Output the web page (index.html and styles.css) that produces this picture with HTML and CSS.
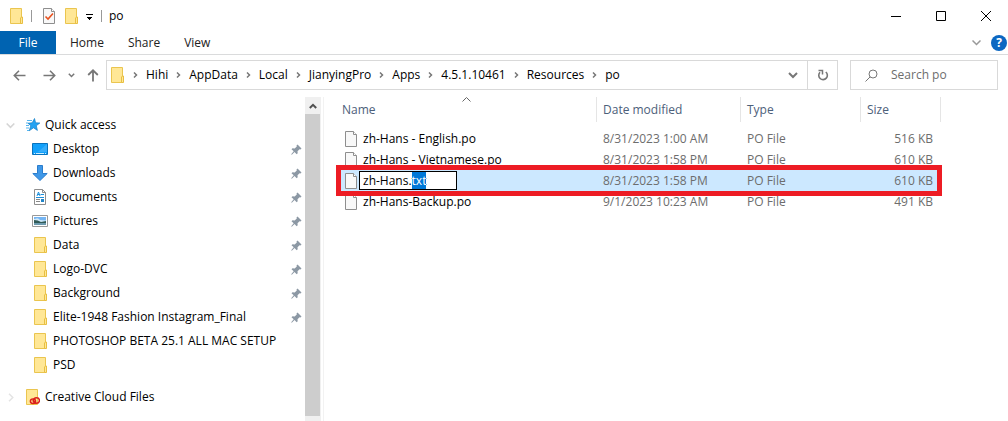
FILE: index.html
```
<!DOCTYPE html>
<html lang="en">
<head>
<meta charset="utf-8">
<title>po</title>
<link rel="stylesheet" href="styles.css">
</head>
<body>
<svg class="sprite" aria-hidden="true">
  <symbol id="folder" viewBox="0 0 14 16">
    <path d="M.5.5h11v15H.5z" fill="#ffe796" stroke="#eac54f"/>
    <path d="M10.500 15.500V10l1-1h1v6.500z" fill="#ffe796" stroke="#e8bf42"/>
  </symbol>
  <symbol id="page" viewBox="0 0 12 16">
    <path d="M.5.5h8l3 3v12H.5z" fill="#f8f8f8" stroke="#8e8e8e"/>
    <path d="M8.500.5v3h3" fill="#fff" stroke="#8e8e8e"/>
  </symbol>
  <symbol id="pin" viewBox="0 0 11 11">
    <path d="M6.500.5l4 4-1 1-1-.2-2 2 .2 2-1 1L3.500 8 .8 10.700l-.6-.4L2.700 7.300.5 5.200l1-1 2.200.3 2.100-2-.3-1z" fill="#8c98a4"/>
  </symbol>
  <symbol id="next" viewBox="0 0 5 6">
    <path d="M1 .5 3.500 3 1 5.500" fill="none" stroke="#777" stroke-width="1.500"/>
  </symbol>
</svg>

<header class="titlebar">
  <svg class="folder"><use href="#folder"/></svg>
  <span class="rule"></span>
  <button class="plain" aria-label="Properties"><svg width="12" height="16" viewBox="0 0 12 16"><use href="#page" width="12" height="16"/><path d="M2.500 8.500 5 11l5-5.500" fill="none" stroke="#e8511e" stroke-width="1.600"/></svg></button>
  <button class="plain" aria-label="New folder"><svg class="folder"><use href="#folder"/></svg></button>
  <button class="plain customize" aria-label="Customize toolbar"><svg width="7" height="6" viewBox="0 0 7 6"><path d="M0 0h7v1H0zM1 3h5v1H5v1H4v1H3V5H2V4H1z"/></svg></button>
  <span class="rule"></span>
  <h1 class="title">po</h1>
  <div class="window-controls">
    <button aria-label="Minimize"><svg width="10" height="10"><path d="M0 5.500h10" stroke="#000"/></svg></button>
    <button aria-label="Maximize"><svg width="10" height="10"><path d="M.5.5h9v9h-9z" fill="none" stroke="#000"/></svg></button>
    <button aria-label="Close"><svg width="10" height="10"><path d="m0 0 10 10M10 0 0 10" stroke="#000"/></svg></button>
  </div>
</header>

<nav class="tabs">
  <button class="file-tab">File</button>
  <button>Home</button>
  <button>Share</button>
  <button>View</button>
  <div class="tab-tools">
    <button aria-label="Expand ribbon"><svg width="9" height="6" viewBox="0 0 9 6"><path d="m.5.5 4 4 4-4" fill="none" stroke="#999" stroke-width="1.500"/></svg></button>
    <button class="help" aria-label="Help">?</button>
  </div>
</nav>

<div class="navigation">
  <div class="history">
    <button aria-label="Back"><svg width="13" height="11" viewBox="0 0 13 11"><path d="M12.500 5.500H1.500M6 .8 1.300 5.500 6 10.200" fill="none" stroke="#777" stroke-width="1.600"/></svg></button>
    <button aria-label="Forward"><svg width="13" height="11" viewBox="0 0 13 11"><path d="M.5 5.500h11M7 .8l4.700 4.700L7 10.200" fill="none" stroke="#777" stroke-width="1.600"/></svg></button>
    <button aria-label="Recent locations"><svg width="7" height="5" viewBox="0 0 7 5"><path d="m.8.8 2.700 2.700L6.200.8" fill="none" stroke="#777" stroke-width="1.500"/></svg></button>
    <button aria-label="Up"><svg width="12" height="13" viewBox="0 0 12 13"><path d="M6 12.500V1.500M1.200 6 6 1.300 10.800 6" fill="none" stroke="#777" stroke-width="1.800"/></svg></button>
  </div>
  <div class="address">
    <svg class="folder"><use href="#folder"/></svg>
    <svg class="next"><use href="#next"/></svg><a href="#">Hihi</a>
    <svg class="next"><use href="#next"/></svg><a href="#">AppData</a>
    <svg class="next"><use href="#next"/></svg><a href="#">Local</a>
    <svg class="next"><use href="#next"/></svg><a href="#">JianyingPro</a>
    <svg class="next"><use href="#next"/></svg><a href="#">Apps</a>
    <svg class="next"><use href="#next"/></svg><a href="#">4.5.1.10461</a>
    <svg class="next"><use href="#next"/></svg><a href="#">Resources</a>
    <svg class="next"><use href="#next"/></svg><a href="#">po</a>
    <button class="drop" aria-label="Previous locations"><svg width="10" height="7" viewBox="0 0 10 7"><path d="m1 1 4 4 4-4" fill="none" stroke="#777" stroke-width="2"/></svg></button>
    <button class="refresh" aria-label="Refresh"><svg width="12" height="12" viewBox="0 0 12 12"><path d="M8.800 3A4.300 4.300 0 1 1 3 3.300" fill="none" stroke="#777" stroke-width="1.600"/><path d="M1.500 1.500h4v4" fill="none" stroke="#777" stroke-width="1.500"/></svg></button>
  </div>
  <label class="search">
    <svg width="13" height="13" viewBox="0 0 13 13"><circle cx="8" cy="5" r="4" fill="none" stroke="#777"/><path d="M5.200 7.800.5 12.500" stroke="#777"/></svg>
    <input type="search" placeholder="Search po" aria-label="Search po">
  </label>
</div>

<main class="content">
  <aside class="sidebar">
    <div class="tree">
      <a class="root" href="#">
        <svg class="twist" viewBox="0 0 9 9"><path d="m.7 2.500 3.800 3.800 3.800-3.800" fill="none" stroke="#d5d5d5" stroke-width="1.600"/></svg>
        <svg width="14" height="14" viewBox="0 0 14 14"><path d="M8.500.5 9.600 4.800l4.300.2-3.600 2.700 1.100 4.700-3.900-2.600-4.300 3 1.600-5L2 5.200l4.200-.4z" fill="#22a2f2" stroke="#147fc7" stroke-width=".7"/><path d="M1 2.500h5M0 5h2M0 7.500h3M0 10h3M1 12.500h2" stroke="#54b4ee"/></svg>
        Quick access</a>
      <ul class="places">
        <li><a href="#"><svg viewBox="0 0 16 16"><path d="M.5 2.500h15v11H.5z" fill="#12a0fa" stroke="#0872bd"/><path d="M15 3v8H6z" fill="#36adfb"/><path d="M2 12.500h1M4 12.500h8M13 12.500h1" stroke="#cdeeff"/></svg>Desktop</a><svg class="pin"><use href="#pin"/></svg></li>
        <li><a href="#"><svg viewBox="0 0 16 16"><path d="M5.500.5h5v8h4.700L8 15.500.8 8.500h4.700z" fill="#3f98e8" stroke="#2b7dcc"/></svg>Downloads</a><svg class="pin"><use href="#pin"/></svg></li>
        <li><a href="#"><svg viewBox="0 0 16 16"><path d="M2.500.5h8l3 3v12h-11z" fill="#fff" stroke="#8e8e8e"/><path d="M10.500.5v3h3" fill="none" stroke="#8e8e8e"/><path d="m5 7 1.500-4L8 7M5.500 5.500h2M8.500 5.500H12M4 8.500h8" fill="none" stroke="#1b8fdc"/><path d="M4 10.500h4M4 12.500h4" stroke="#888"/><path d="M9 10h3v3H9z" fill="#2184c7"/></svg>Documents</a><svg class="pin"><use href="#pin"/></svg></li>
        <li><a href="#"><svg viewBox="0 0 16 16"><path d="M.5 2.500h15v11H.5z" fill="#fff" stroke="#999"/><path d="M2 4h12v4H2z" fill="#75b5f3"/><path d="M3 6q3-2 5 1l6 .5V9H2V6z" fill="#cfe8f8"/><path d="M2 7q4 0 7 2l5-1v2H2z" fill="#315b57"/><path d="M2 10h12v2H2z" fill="#6c9aae"/></svg>Pictures</a><svg class="pin"><use href="#pin"/></svg></li>
        <li><a href="#"><svg class="folder"><use href="#folder"/></svg>Data</a><svg class="pin"><use href="#pin"/></svg></li>
        <li><a href="#"><svg class="folder"><use href="#folder"/></svg>Logo-DVC</a><svg class="pin"><use href="#pin"/></svg></li>
        <li><a href="#"><svg class="folder"><use href="#folder"/></svg>Background</a><svg class="pin"><use href="#pin"/></svg></li>
        <li><a href="#"><svg class="folder"><use href="#folder"/></svg>Elite-1948 Fashion Instagram_Final</a><svg class="pin"><use href="#pin"/></svg></li>
        <li><a href="#"><svg class="folder"><use href="#folder"/></svg>PHOTOSHOP BETA 25.1 ALL MAC SETUP</a></li>
        <li><a href="#"><svg class="folder"><use href="#folder"/></svg>PSD</a></li>
      </ul>
      <a class="root" href="#">
        <svg class="twist" viewBox="0 0 9 9"><path d="m3 .7 3.800 3.800L3 8.300" fill="none" stroke="#e4e4e4" stroke-width="1.500"/></svg>
        <svg width="14" height="16" viewBox="0 0 14 16"><path d="M.5.5h11v15H.5z" fill="#ffe796" stroke="#eac54f"/><g fill="none" stroke="#da1f1b" stroke-width="1.500"><ellipse cx="7" cy="12.200" rx="2.600" ry="2.200"/><ellipse cx="10.500" cy="11.500" rx="2.900" ry="2.800"/><path d="m6.500 11.500 3.500 2.700"/></g></svg>
        Creative Cloud Files</a>
    </div>
    <div class="scrollbar">
      <button aria-label="Scroll up"><svg width="8" height="6" viewBox="0 0 8 6"><path d="m.8 5 3.200-3.200L7.200 5" fill="none" stroke="#505050" stroke-width="2"/></svg></button>
      <div class="thumb"></div>
    </div>
  </aside>

  <section class="files">
    <table>
      <colgroup><col class="c-name"><col class="c-date"><col class="c-type"><col class="c-size"></colgroup>
      <thead>
        <tr>
          <th scope="col">Name<svg class="sort" viewBox="0 0 9 5"><path d="m.5 4.500 4-4 4 4" fill="none" stroke="#666"/></svg></th>
          <th scope="col">Date modified</th><th scope="col">Type</th><th scope="col">Size</th>
        </tr>
      </thead>
      <tbody>
        <tr><td><div class="name"><svg><use href="#page"/></svg><span>zh-Hans - English.po</span></div></td><td>8/31/2023 1:00 AM</td><td>PO File</td><td>516 KB</td></tr>
        <tr><td><div class="name"><svg><use href="#page"/></svg><span>zh-Hans - Vietnamese.po</span></div></td><td>8/31/2023 1:58 PM</td><td>PO File</td><td>610 KB</td></tr>
        <tr class="selected"><td><div class="name"><svg><use href="#page"/></svg><input id="rename" type="text" value="zh-Hans.txt" aria-label="File name" spellcheck="false"></div></td><td>8/31/2023 1:58 PM</td><td>PO File</td><td>610 KB</td></tr>
        <tr><td><div class="name"><svg><use href="#page"/></svg><span>zh-Hans-Backup.po</span></div></td><td>9/1/2023 10:23 AM</td><td>PO File</td><td>491 KB</td></tr>
      </tbody>
    </table>
  </section>
</main>
<script src="main.js"></script>
</body>
</html>
```
FILE: styles.css
```
* { box-sizing: border-box; }
body {
  margin: 0;
  min-height: 100vh;
  display: flex;
  flex-direction: column;
  background: #fff;
  color: #000;
  font: 12px/16px "Open Sans", "Segoe UI", sans-serif;
}
button, input { font: inherit; color: inherit; }
button { border: 0; padding: 0; background: none; display: flex; align-items: center; justify-content: center; }
a { color: inherit; text-decoration: none; white-space: nowrap; }
svg { flex: none; display: block; }
.sprite { position: absolute; width: 0; height: 0; }
.folder { width: 14px; height: 16px; }

.titlebar { display: flex; align-items: center; height: 31px; padding-left: 10px; }
.titlebar .rule { width: 1px; height: 12px; margin: 0 11px 0 7px; background: #999; }
.titlebar .plain { margin-right: 10px; }
.titlebar .customize { margin: 2px 1px 0 -3px; }
.title { margin: 0 0 0 -4px; font-size: 12px; font-weight: 400; }
.window-controls { display: flex; align-self: stretch; margin-left: auto; }
.window-controls button { width: 45px; }

.tabs { display: flex; height: 24px; border-bottom: 1px solid #dadbdc; color: #222; }
.tabs > button { padding: 0 12px; }
.tabs .file-tab { width: 56px; background: #0063b1; color: #fff; margin-right: 2px; }
.tab-tools { display: flex; align-items: center; gap: 10px; margin-left: auto; }
.tab-tools .help { width: 16px; height: 16px; border-radius: 8px; background: #0b67c2; color: #fff; font-weight: 700; margin-right: 1px; }

.navigation { display: flex; align-items: center; padding: 5px 10px 6px 0; }
.history { display: flex; align-items: center; gap: 12px; width: 106px; padding-left: 13px; }
.history button:first-child { margin-right: 5px; }
.address { display: flex; align-items: center; flex: 1; height: 30px; padding-left: 4px; border: 1px solid #d9d9d9; }
.address .next { width: 5px; height: 6px; margin: 0 8px; }
.address .drop { width: 28px; align-self: stretch; margin-left: auto; }
.address .refresh { width: 30px; align-self: stretch; border-left: 1px solid #d9d9d9; }
.search { display: flex; align-items: center; gap: 13px; width: 148px; height: 30px; margin-left: 12px; padding: 0 14px; border: 1px solid #d9d9d9; }
.search input { flex: 1; min-width: 0; border: 0; padding: 0; outline: 0; background: none; }
.search input::placeholder { color: #6d6d6d; opacity: 1; }

.content { display: flex; flex: 1; padding-top: 1px; }
.sidebar { display: flex; width: 324px; border-right: 1px solid #f2f2f2; }
.tree { flex: 1; padding-top: 16px; }
.root { display: flex; align-items: center; height: 24px; padding-left: 6px; gap: 5px; }
.root .twist { width: 9px; height: 9px; margin-right: 6px; }
.places { margin: 0 0 8px; padding: 0 3px 0 32px; list-style: none; }
.places li { display: flex; align-items: center; justify-content: space-between; height: 24px; }
.places a { display: flex; align-items: center; gap: 5px; }
.places a svg { width: 16px; height: 16px; }
.places a .folder { width: 14px; margin-left: 2px; }
.places .pin { width: 11px; height: 11px; }
.scrollbar { display: flex; flex-direction: column; width: 16px; margin-right: 2px; padding-bottom: 5px; background: #f0f0f0; }
.scrollbar button { height: 17px; }
.scrollbar .thumb { flex: 1; margin-right: 1px; background: #cdcdcd; }

.files { flex: 1; padding-left: 17px; }
table { table-layout: fixed; width: 600px; border-collapse: separate; border-spacing: 0; }
.c-name { width: 256px; }
.c-date { width: 144px; }
.c-type { width: 120px; }
.c-size { width: 80px; }
th { position: relative; height: 25px; padding: 0 6px; border-right: 1px solid #e5e5e5; text-align: left; font-weight: 400; color: #4c607a; }
th:first-child { padding-left: 1px; }
.sort { position: absolute; top: 0; left: 121px; width: 9px; height: 5px; }
tbody::before { content: ""; display: block; height: 6px; }
td { height: 21px; padding: 0 6px; color: #6d6d6d; white-space: nowrap; }
td:first-child { padding: 0 0 0 4px; color: #000; }
td:last-child { padding-right: 8px; text-align: right; }
.name { display: flex; align-items: center; height: 21px; }
.name svg { width: 12px; height: 16px; }
.name span { padding-left: 6px; }
.name input { width: 98px; height: 19px; margin-left: 2px; padding: 0 3px; border: 1px solid #000; background: #fff; outline: 0; }
.name input::selection { background: #0078d7; color: #fff; }
.selected { position: relative; background: #cce8ff; }
.selected::after { content: ""; position: absolute; inset: -5px -1px -5px -5px; border: 5px solid #ed1c24; pointer-events: none; }
```
FILE: main.js
```
const rename = document.getElementById("rename");
rename.focus();
rename.setSelectionRange(rename.value.lastIndexOf(".") + 1, rename.value.length);
```
